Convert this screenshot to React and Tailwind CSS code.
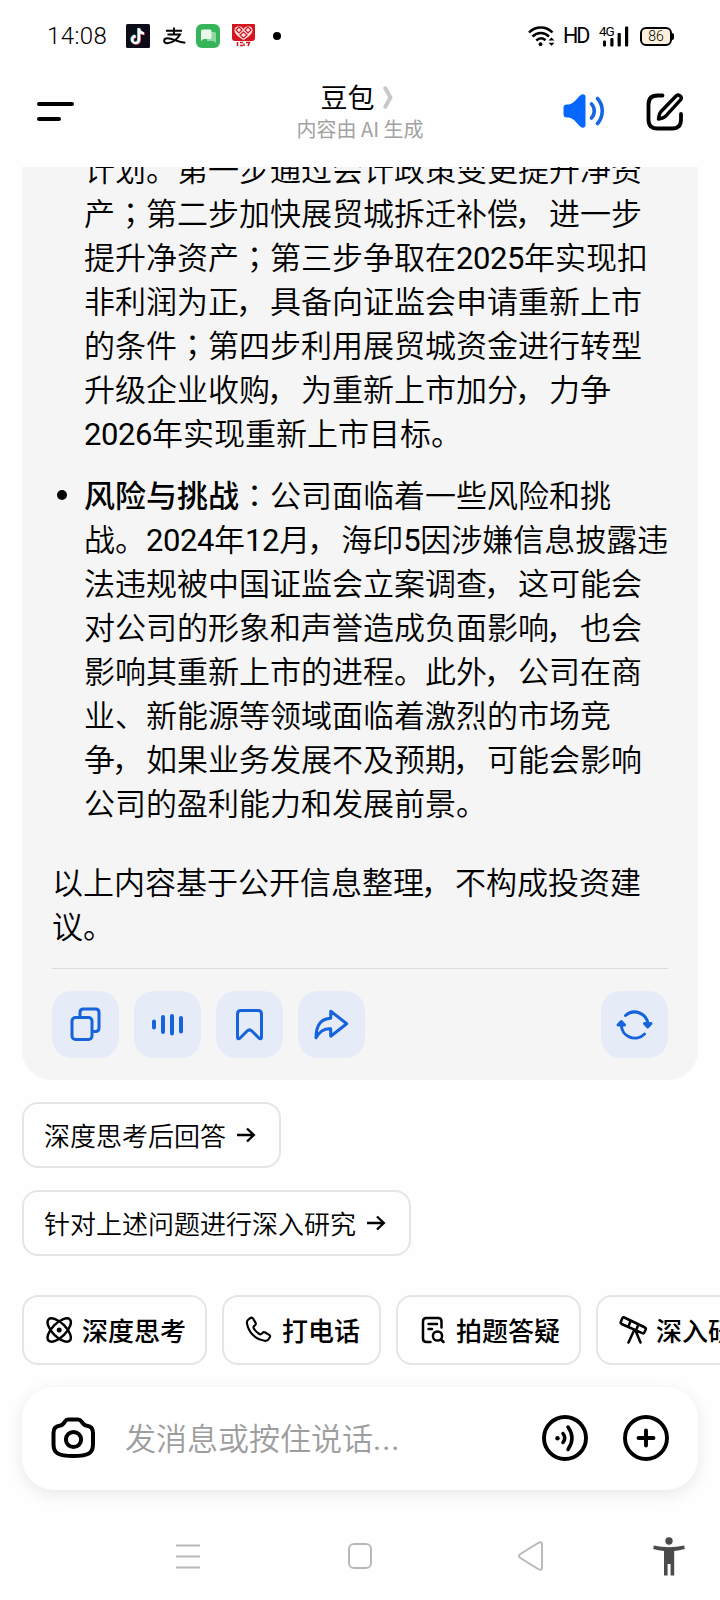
const steps = [
  "计划。第一步通过会计政策变更提升净资",
  "产；第二步加快展贸城拆迁补偿，进一步",
  "提升净资产；第三步争取在2025年实现扣",
  "非利润为正，具备向证监会申请重新上市",
  "的条件；第四步利用展贸城资金进行转型",
  "升级企业收购，为重新上市加分，力争",
  "2026年实现重新上市目标。",
];

const risks = [
  "战。2024年12月，海印5因涉嫌信息披露违",
  "法违规被中国证监会立案调查，这可能会",
  "对公司的形象和声誉造成负面影响，也会",
  "影响其重新上市的进程。此外，公司在商",
  "业、新能源等领域面临着激烈的市场竞",
  "争，如果业务发展不及预期，可能会影响",
  "公司的盈利能力和发展前景。",
];

// Centers colons/semicolons in their cell, pulls commas left and tightens digits
function Line({ children }) {
  const parts = children.split(/([；：，]|\d+)/);
  return (
    <span className="block h-[44px] whitespace-nowrap">
      {parts.map((part, i) => {
        if (/^[；：]$/.test(part)) {
          return <span key={i} className="font-['Noto_Sans_CJK_TC',sans-serif] leading-none">{part}</span>;
        }
        if (part === "，") {
          return <span key={i} className="-ml-[3px] mr-[3px]">{part}</span>;
        }
        if (/^\d+$/.test(part)) {
          return <span key={i} className="font-[Roboto,sans-serif] font-normal leading-none tracking-[-0.4px]">{part}</span>;
        }
        return part;
      })}
    </span>
  );
}

function StatusBar() {
  return (
    <div className="flex h-[72px] shrink-0 items-center pl-[47px] pr-[46px]">
      <span className="w-[79px] font-[Roboto,sans-serif] text-2xl font-[350] tracking-[0.4px]">14:08</span>
      <svg width="24" height="24" viewBox="0 0 24 24" fill="none">
        <rect width="24" height="24" rx="1.5" fill="#0b0c18" />
        <g strokeWidth="2.4">
          <path d="M12.3 4v11.2a3.4 3.4 0 1 1-3.4-3.4M12.3 4c.3 2.7 2.300 4.700 5 5" stroke="#43e0e4" />
          <path d="M13.700 5v11.200a3.400 3.400 0 1 1-3.400-3.400M13.700 5c.3 2.700 2.300 4.700 5 5" stroke="#ee4560" />
          <path d="M13 4.500v11.200a3.400 3.400 0 1 1-3.400-3.400M13 4.500c.3 2.700 2.300 4.700 5 5" stroke="#fff" />
        </g>
      </svg>
      <svg className="ml-[13px]" width="23" height="18" viewBox="0 0 23 18" fill="none" stroke="#000" strokeWidth="1.900">
        <path d="M3 3.800h16M11 .5v7M4.500 7.500h12.500C14.500 12 9.500 16.200 4.500 16.200c-4.500 0-4.500-5 0-5 5.500 0 10 4.300 17.800 4.600" />
      </svg>
      <svg className="ml-[10px]" width="24" height="24" viewBox="0 0 24 24">
        <rect width="24" height="24" rx="6" fill="#35b45a" />
        <path d="M11 8h7.500a1.500 1.500 0 0 1 1.500 1.500V19l-2.500-2H11z" fill="#8fd8a2" />
        <path d="M6.500 5.500h7.500A1.500 1.500 0 0 1 15.500 7v6.500A1.500 1.500 0 0 1 14 15H7.500L5 17V7a1.500 1.500 0 0 1 1.500-1.500z" fill="#e8f8eb" />
      </svg>
      <svg className="ml-[11px]" width="25" height="24" viewBox="0 0 25 24">
        <path d="M1 0h22a1 1 0 0 1 1 1v13q0 3-3 3H4q-3 0-3-3z" fill="#d4141e" />
        <path d="M12.500 16C8 13 3.500 10 3.500 6.200 3.500 1.500 10 1 12.500 5c2.500-4 9-3.500 9 1.200 0 3.800-4.500 6.800-9 9.800z" fill="#fbe4e4" />
        <path d="M5 6l3-3 3 3-3 3zM14 6l3-3 3 3-3 3zM9 11l3.500-3 3.500 3-3.500 3z" fill="none" stroke="#d4141e" strokeWidth="1.200" />
        <path d="M6.500 18v4M9 18.500h3M9 21.500h3M13 22v-2.500M15 18.500h3.500l-1.500 3.500" fill="none" stroke="#d4141e" strokeWidth="1.500" />
      </svg>
      <span className="ml-[17px] size-2 rounded-full bg-black" />

      <div className="ml-auto flex items-center">
        <svg className="-ml-px" width="27" height="21" viewBox="0 0 27 21" fill="none" stroke="#000" strokeWidth="2.500">
          <path d="M1 6.500C7.500-.3 18-.3 24.500 6.500M4.500 10.500c4.800-4.700 11.800-4.700 16.500 0M8.300 14.500c3-2.700 6.500-2.700 9.200-.3" />
          <circle cx="12.500" cy="18.200" r="1.900" fill="#000" stroke="none" />
          <path d="M20.500 14.500l3-3 3 3zM20.500 16.800l3 3 3-3z" fill="#000" stroke="none" />
        </svg>
        <span className="ml-[8px] w-[27px] font-[Roboto,sans-serif] text-[21.500px] tracking-[-2px]">HD</span>
        <div className="relative ml-[9px] h-[22px] w-[30px]">
          <span className="absolute left-0 top-[-1px] font-[Roboto,sans-serif] text-[13.500px] leading-[14px] tracking-[-1px]">4G</span>
          <svg width="30" height="22" viewBox="0 0 30 22" fill="#000">
            <rect x="4" y="15.500" width="3" height="6" rx="1" />
            <rect x="11.300" y="13" width="3.200" height="8.500" rx="1" />
            <rect x="18.600" y="8" width="3.200" height="13.500" rx="1" />
            <rect x="26" y="1.500" width="3.200" height="20" rx="1" />
          </svg>
        </div>
        <div className="ml-[11px] flex items-center">
          <div className="flex h-[19px] w-[32px] items-center justify-center rounded-[6px] border-2 border-black bg-[#fdf1de] font-[Roboto,sans-serif] text-[14px] font-light leading-none">
            86
          </div>
          <span className="h-[7px] w-[2px] rounded-r bg-black" />
        </div>
      </div>
    </div>
  );
}

function Header() {
  return (
    <div className="flex h-[95px] shrink-0 items-start justify-between pl-[37px] pr-[35px]">
      <div className="flex w-[122px] flex-col gap-[11px] pt-[30px]">
        <span className="h-1 w-[37px] rounded-full bg-black" />
        <span className="h-1 w-6 rounded-full bg-black" />
      </div>
      <div className="flex flex-col items-center pt-[7px]">
        <div className="mr-[7px] flex items-center text-[27px] leading-[36px]">
          豆包
          <svg className="ml-[9px]" width="11" height="23" viewBox="0 0 11 23" fill="none" stroke="#c8c8c8" strokeWidth="4" strokeLinecap="round" strokeLinejoin="round">
            <path d="M2.300 2.300L7.500 11.500 2.300 20.700" />
          </svg>
        </div>
        <div className="mr-[2px] whitespace-nowrap text-[20px] leading-[27px] text-[#a2a2a2]">内容由 AI 生成</div>
      </div>
      <div className="flex w-[122px] pt-[20px]">
        <svg width="42" height="38" viewBox="0 0 42 38" fill="none" stroke="#0567ff" strokeWidth="3.600" strokeLinecap="round">
          <path d="M4 12.500h2c6-1.500 8-6.500 11.500-9.200 2.300-1.800 5-1 5 1.500v28.400c0 2.500-2.700 3.300-5 1.500C14 32 12 27 6 25.500H4c-2.500 0-3.500-1-3.500-3.500v-6c0-2.500 1-3.500 3.500-3.500z" fill="#0567ff" stroke="none" />
          <path d="M28.500 12c3.600 3.500 3.600 10.500 0 14M34.500 6.500c6.300 7 6.300 18 0 25" stroke="#1766e2" />
        </svg>
        <svg className="ml-10" width="39" height="40" viewBox="0 0 39 40" fill="none" stroke="#000" strokeWidth="3.800" strokeLinecap="round" strokeLinejoin="round">
          <path d="M17.500 3.500H12.500Q3.500 3.500 3.500 12.500v15q0 9 9 9h14.500q9 0 9-9v-5.500" />
          <path d="M31 4q2.400-2 4.300 0 2 2 0 4.200L20.500 24.300q-1.200 1.200-3 1.700l-4 1 .8-4.200q.4-1.800 1.500-3z" strokeWidth="3.400" />
        </svg>
      </div>
    </div>
  );
}

function ActionButton({ children, className = "" }) {
  return (
    <button className={`size-[67px] rounded-[20px] bg-[#e5ecf7] ${className}`}>
      <svg width="67" height="67" viewBox="0 0 67 67" fill="none" stroke="#1663dc" strokeWidth="3" strokeLinecap="round" strokeLinejoin="round">
        {children}
      </svg>
    </button>
  );
}

function Answer() {
  return (
    <div className="mx-[22px] flex h-[913px] shrink-0 flex-col justify-end overflow-hidden rounded-b-[30px] bg-[#f5f5f5] px-[30px] pb-[22px] text-[31px] leading-[44px] font-[350]">
      <div className="pl-8">
        {steps.map((text) => <Line key={text}>{text}</Line>)}
      </div>
      <div className="mt-[18px] flex">
        <span className="ml-[5px] mt-[18px] size-[10px] shrink-0 rounded-full bg-black" />
        <div className="ml-[17px]">
          <div className="flex">
            <b className="font-medium">风险与挑战</b>
            <Line>：公司面临着一些风险和挑</Line>
          </div>
          {risks.map((text) => <Line key={text}>{text}</Line>)}
        </div>
      </div>
      <div className="mt-[35px]">
        <Line>以上内容基于公开信息整理，不构成投资建</Line>
        <Line>议。</Line>
      </div>
      <div className="mt-[21px] flex gap-[15px] border-t border-[#dcdcdc] pt-[22px]">
        <ActionButton>
          <path d="M28 25v-3.500q0-3.500 3.500-3.500h12q3.500 0 3.500 3.500v15.500q0 3.500-3.500 3.500h-3" />
          <rect x="20" y="26.500" width="20" height="22" rx="3.500" />
        </ActionButton>
        <ActionButton>
          <path d="M20 30.500v6M29 26v15M38 25v17.500M47 27v13.500" strokeWidth="4" />
        </ActionButton>
        <ActionButton>
          <path d="M25 19.500h17q3.500 0 3.500 3.500v23q0 3-2.600 1l-7-7q-2.400-2.200-4.800 0l-7 7q-2.600 2-2.600-1V23q0-3.500 3.500-3.500z" />
        </ActionButton>
        <ActionButton>
          <path d="M32.700 20.200l16 12.500-16 12.500v-7.500c-7-.5-11 2.300-14.700 9 0-12 5-19 14.700-19.500z" />
        </ActionButton>
        <ActionButton className="ml-auto">
          <path d="M24.500 24.500A13.500 13.500 0 0 1 47 33.500M43.500 43A13.500 13.500 0 0 1 20.300 33.500" />
          <path d="M43.500 32.500h6.500L46.700 36zM17 34h6.500L20.300 30.500z" fill="#1663dc" />
        </ActionButton>
      </div>
    </div>
  );
}

function Suggestion({ children }) {
  return (
    <button className="flex h-[66px] items-center rounded-[16px] border-2 border-[#e5e5e5] pb-[2px] pl-5 pr-[23px] text-[26px] font-[350]">
      {children}
      <svg className="ml-[10px] mt-px" width="20" height="18" viewBox="0 0 20 18" fill="none" stroke="#000" strokeWidth="2.400">
        <path d="M1 9h17M11 2.500L17.800 9 11 15.500" />
      </svg>
    </button>
  );
}

function Tool({ label, children }) {
  return (
    <button className="flex h-[70px] shrink-0 items-center rounded-[16px] border-2 border-[#e5e5e5] pl-[21px] pr-[19px] text-[26px] font-medium">
      <svg className="mr-[8px]" width="29" height="30" viewBox="0 0 29 30" fill="none" stroke="#000" strokeWidth="2.500" strokeLinecap="round" strokeLinejoin="round">
        {children}
      </svg>
      <span className="pb-[2px]">{label}</span>
    </button>
  );
}

function Toolbar() {
  return (
    <div className="ml-[22px] mt-[39px] flex shrink-0 gap-[15px] overflow-hidden whitespace-nowrap">
      <Tool label="深度思考">
        <ellipse cx="14.200" cy="15" rx="15" ry="6.800" transform="rotate(45 14.200 15)" />
        <ellipse cx="14.200" cy="15" rx="15" ry="6.800" transform="rotate(-45 14.200 15)" />
        <circle cx="14.200" cy="15" r="2.500" fill="#000" stroke="none" />
      </Tool>
      <Tool label="打电话">
        <path d="M3.500 4.300l2-1.300q1.600-1 2.600.6l2.400 4q.8 1.500-.5 2.600l-1 .9q-1 .9-.2 2.300 2 3.500 5.600 5.600 1.200.7 2.200-.2l1-1q1.100-1.200 2.600-.3l4 2.300q1.600 1 .6 2.500l-1.200 2q-1.200 1.900-4 1.500C10 24.500 3.500 17 2 8.500 1.600 6 1.800 5.400 3.500 4.300z" strokeWidth="2.100" />
      </Tool>
      <Tool label="拍题答疑">
        <path d="M11.500 27H7.500Q4 27 4 23.500v-17Q4 3 7.500 3h11.500Q22.500 3 22.500 6.500v6M9.500 9h8.500M9.500 14h3.500" />
        <circle cx="18.500" cy="21" r="4.600" />
        <path d="M22 24.500l2.500 2.500" />
      </Tool>
      <Tool label="深入研究">
        <path d="M5.300 2.500L26 12.500q1.300.7.700 2l-1.400 3q-.6 1.300-2 .7L2.600 9q-1.400-.7-.8-2l1.400-3.500q.6-1.600 2.100-1zM11.500 6L9.300 12M19.500 9.600l-2.500 5.600M15 15.500L9.500 27.500M16.500 15.500l5 12" />
      </Tool>
    </div>
  );
}

function Composer() {
  return (
    <div className="mx-[22px] mt-[22px] flex h-[103px] shrink-0 items-center rounded-[32px] bg-white pl-[29px] pr-[28px] shadow-[0_4px_16px_rgba(0,0,0,0.09)]">
      <svg className="mb-px" width="46" height="44" viewBox="0 0 46 44" fill="none" stroke="#000" strokeWidth="4" strokeLinejoin="round">
        <path d="M17.500 3.500h9.500q2 0 3.500 2l1.500 2q1.500 2 4 2.200 6 .8 6 7.300v11c0 9-4 12-19.700 12S2.500 37 2.500 28V17q0-6.500 6-7.300 2.500-.2 4-2.200l1.500-2q1.200-2 3-2z" />
        <circle cx="22.500" cy="23.500" r="7.600" />
      </svg>
      <span className="ml-[28px] whitespace-nowrap text-[31px] font-[350] text-[#9e9e9e]">
        发消息或按住说话<span className="font-[Roboto,sans-serif] font-normal tracking-[1px]">...</span>
      </span>
      <svg className="mb-px ml-auto" width="48" height="48" viewBox="0 0 48 48" fill="none" stroke="#000" strokeWidth="3.900" strokeLinecap="round">
        <circle cx="24" cy="24" r="21" />
        <circle cx="16.500" cy="24.300" r="2.200" fill="#000" stroke="none" />
        <path d="M22 19.500q3.500 4.500 0 9M27 13q8 11 0 22.500" strokeWidth="3.500" />
      </svg>
      <svg className="mb-px ml-[33px]" width="48" height="48" viewBox="0 0 48 48" fill="none" stroke="#000" strokeWidth="3.900" strokeLinecap="round">
        <circle cx="24" cy="24" r="21" />
        <path d="M16.500 24h15M24 16.500v15" />
      </svg>
    </div>
  );
}

function NavBar() {
  return (
    <div className="flex h-[110px] shrink-0 items-center pl-[176px] pr-[35px] pt-[22px]">
      <svg width="24" height="25" viewBox="0 0 24 25" stroke="#b8b8b8" strokeWidth="1.900">
        <path d="M0 1.500h24M0 12.500h24M0 23.500h24" />
      </svg>
      <span className="ml-[148px] h-[26px] w-6 rounded-[6px] border-2 border-[#b8b8b8]" />
      <svg className="ml-[146px]" width="26" height="30" viewBox="0 0 26 30" fill="none" stroke="#b8b8b8" strokeWidth="1.900" strokeLinejoin="round">
        <path d="M2 13.300L20.500 1.800q3.500-1.800 3.500 1.700v23q0 3.500-3.500 1.700L2 16.700q-2-1.700 0-3.400z" />
      </svg>
      <svg className="ml-auto" width="32" height="39" viewBox="0 0 32 39" fill="#4b4b4b">
        <circle cx="16" cy="4" r="3.700" />
        <path d="M.8 8.500Q16 12 31.200 8.500l.6 3.400Q26 13.500 21.200 14v24.500h-3.600V27h-3v11.500H11V14Q5.500 13.500.2 11.900z" />
      </svg>
    </div>
  );
}

export default function App() {
  return (
    <div className="flex h-[1600px] w-[720px] flex-col overflow-hidden bg-[#fefefe] font-['Noto_Sans_CJK_SC',sans-serif] text-black">
      <StatusBar />
      <Header />
      <Answer />
      <div className="ml-[22px] mt-[22px] flex shrink-0 flex-col items-start gap-[22px]">
        <Suggestion>深度思考后回答</Suggestion>
        <Suggestion>针对上述问题进行深入研究</Suggestion>
      </div>
      <Toolbar />
      <Composer />
      <NavBar />
    </div>
  );
}
